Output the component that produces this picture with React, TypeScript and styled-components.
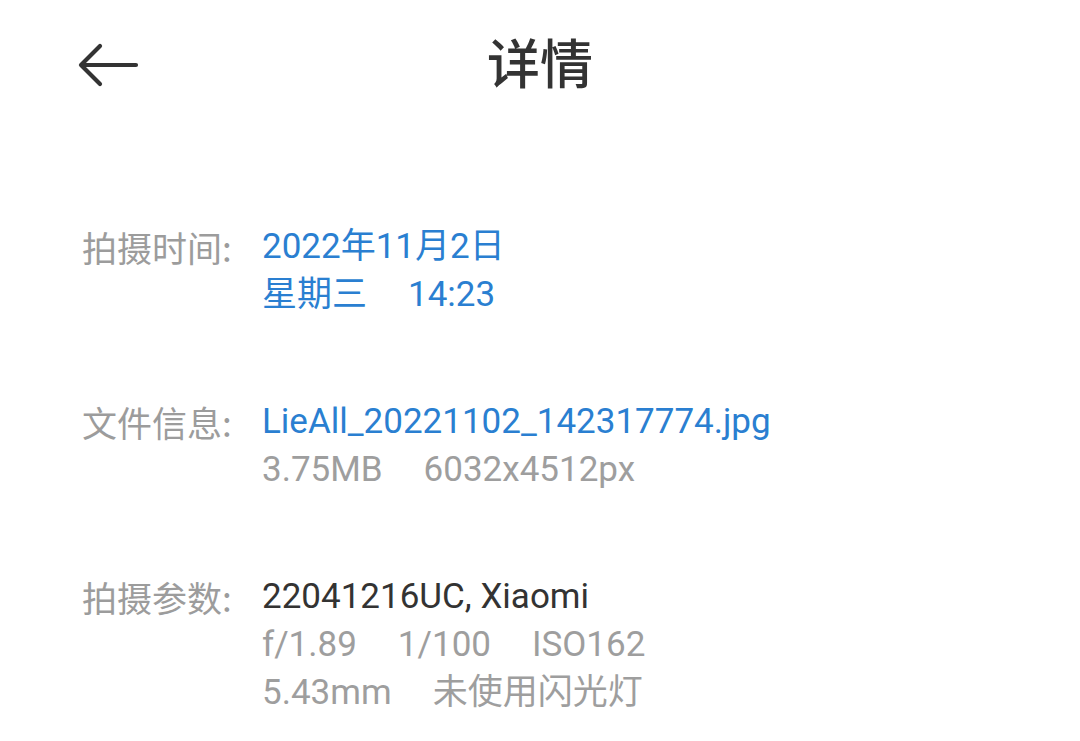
import React from "react";
import styled, { createGlobalStyle } from "styled-components";

const Global = createGlobalStyle`
  html, body { margin: 0; padding: 0; background: #ffffff; }
  body { font-family: Roboto, "Noto Sans CJK SC", sans-serif; }
`;

const Page = styled.div`
  width: 1080px;
  height: 741px;
  background: #ffffff;
  display: flex;
  flex-direction: column;
  overflow: hidden;
`;

const Header = styled.header`
  position: relative;
  height: 128px;
  box-sizing: border-box;
  padding-bottom: 5px;
  display: flex;
  align-items: center;
  justify-content: center;
`;

const BackButton = styled.button`
  position: absolute;
  left: 76px;
  top: 41px;
  width: 64px;
  height: 48px;
  padding: 0;
  border: none;
  background: transparent;
  display: flex;
  align-items: center;
  justify-content: center;
`;

const Title = styled.h1`
  margin: 0;
  font-family: "Noto Sans CJK SC", sans-serif;
  font-size: 53px;
  font-weight: 500;
  color: #333333;
  line-height: 1;
`;

const Content = styled.main`
  display: flex;
  flex-direction: column;
  gap: 79px;
  padding: 95px 0 0 82px;
`;

const Section = styled.section`
  display: grid;
  grid-template-columns: 180px 1fr;
`;

const Label = styled.div`
  font-family: "Noto Sans CJK SC", sans-serif;
  font-size: 35px;
  line-height: 48px;
  color: #9c9c9c;
  font-weight: 400;
`;

const Values = styled.div`
  display: flex;
  flex-direction: column;
`;

const Line = styled.div<{ $tone: "blue" | "dark" | "gray" }>`
  display: flex;
  gap: 41px;
  font-size: 35px;
  line-height: 48px;
  white-space: nowrap;
  color: ${(p) =>
    p.$tone === "blue" ? "#2a7fd1" : p.$tone === "dark" ? "#333333" : "#9e9e9e"};
`;

const BackArrow = () => (
  <svg width="64" height="48" viewBox="0 0 64 48" fill="none">
    <path
      d="M60 24H6M24 5L5 24L24 43"
      stroke="#333333"
      strokeWidth="4.2"
      strokeLinecap="round"
      strokeLinejoin="round"
    />
  </svg>
);

export default function App() {
  return (
    <Page>
      <Global />
      <Header>
        <BackButton aria-label="返回">
          <BackArrow />
        </BackButton>
        <Title>详情</Title>
      </Header>
      <Content>
        <Section>
          <Label>拍摄时间:</Label>
          <Values>
            <Line $tone="blue">2022年11月2日</Line>
            <Line $tone="blue">
              <span>星期三</span>
              <span>14:23</span>
            </Line>
          </Values>
        </Section>
        <Section>
          <Label>文件信息:</Label>
          <Values>
            <Line $tone="blue">LieAll_20221102_142317774.jpg</Line>
            <Line $tone="gray">
              <span>3.75MB</span>
              <span>6032x4512px</span>
            </Line>
          </Values>
        </Section>
        <Section>
          <Label>拍摄参数:</Label>
          <Values>
            <Line $tone="dark">22041216UC, Xiaomi</Line>
            <Line $tone="gray">
              <span>f/1.89</span>
              <span>1/100</span>
              <span>ISO162</span>
            </Line>
            <Line $tone="gray">
              <span>5.43mm</span>
              <span>未使用闪光灯</span>
            </Line>
          </Values>
        </Section>
      </Content>
    </Page>
  );
}
